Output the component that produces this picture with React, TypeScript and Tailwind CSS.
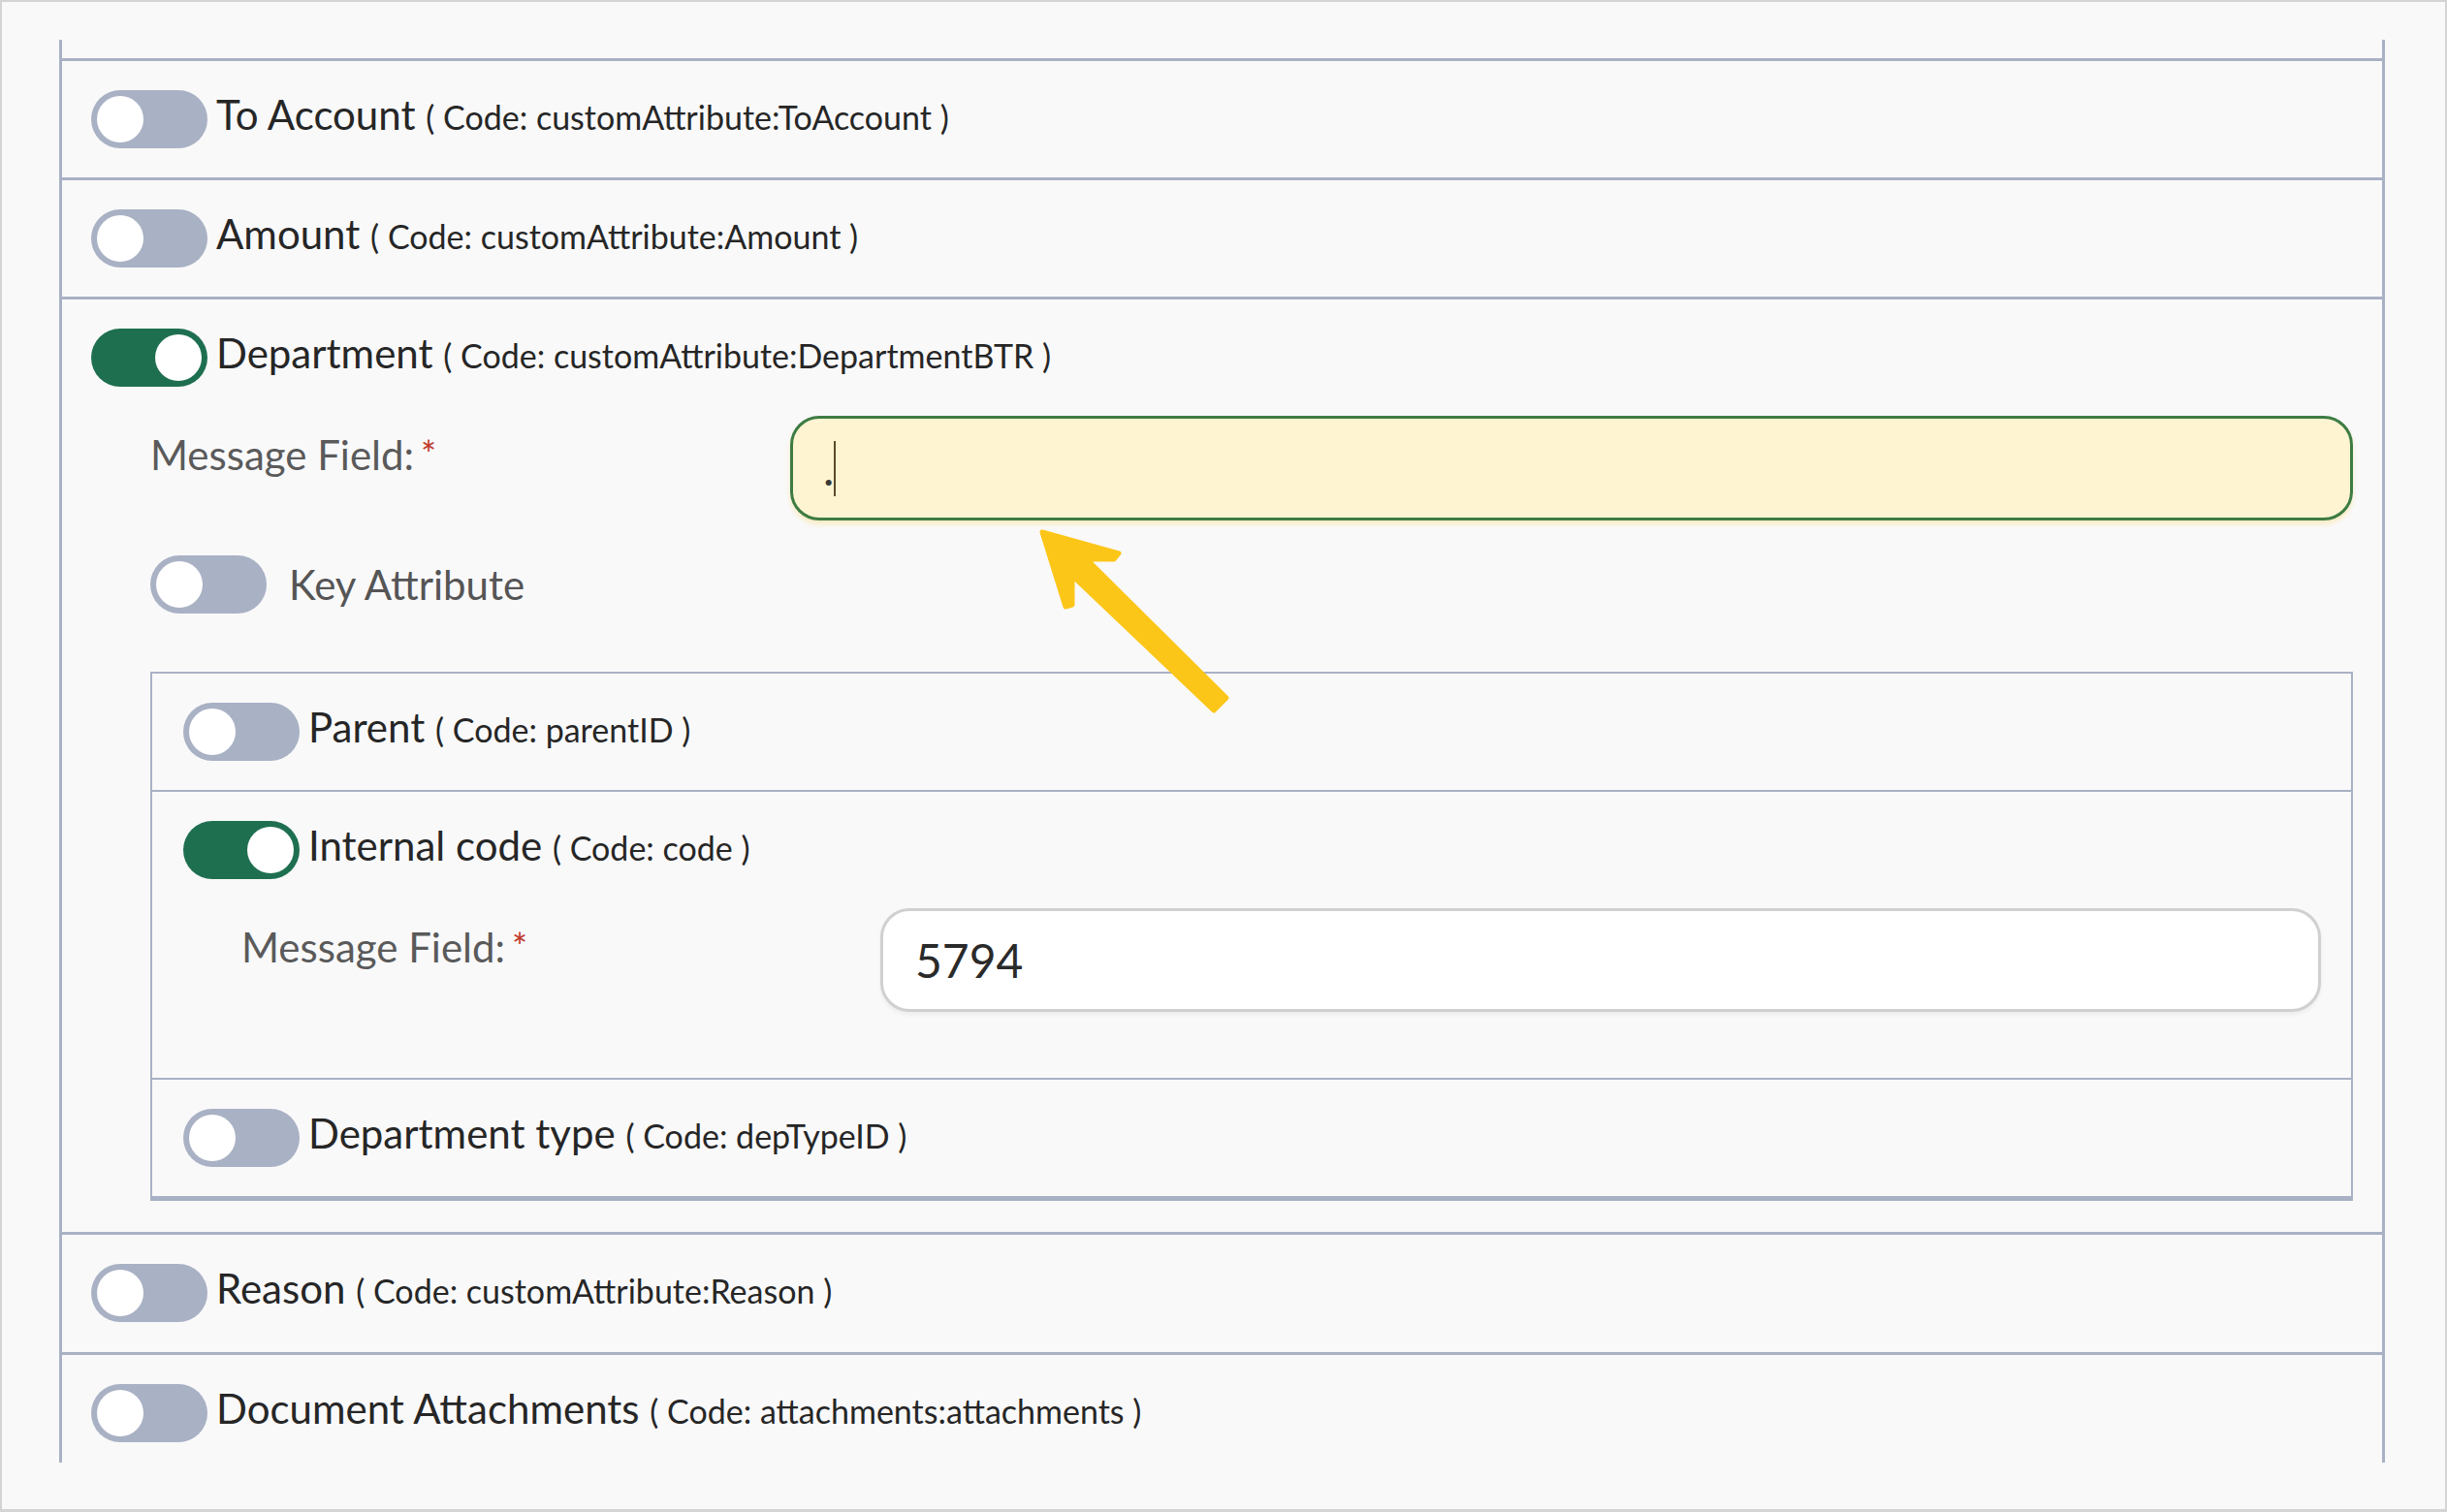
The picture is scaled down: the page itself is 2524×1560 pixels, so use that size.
import React from "react";

function Toggle({ on }: { on?: boolean }) {
  return (
    <div
      className={
        on
          ? "w-[120px] h-[60px] shrink-0 rounded-full bg-[#1e6f50] p-[6px] flex justify-end"
          : "w-[120px] h-[60px] shrink-0 rounded-full bg-[#a9b1c4] p-[6px] flex justify-start"
      }
    >
      <div className="w-[48px] h-[48px] rounded-full bg-white" />
    </div>
  );
}

function Title({ on, name, code }: { on?: boolean; name: string; code: string }) {
  return (
    <div className="flex items-start gap-[9px]">
      <Toggle on={on} />
      <div className="text-[42px] leading-[1.2] text-[#262626] whitespace-nowrap">
        <span>{name} </span>
        <span className="text-[34px]">( Code: {code} )</span>
      </div>
    </div>
  );
}

function Field({ active, value, labelWidth }: { active?: boolean; value: string; labelWidth: "a" | "b" }) {
  return (
    <div className="flex">
      <div
        className={
          labelWidth === "a"
            ? "w-[660px] shrink-0 pt-[15px] text-[42px] leading-[1.2] text-[#5a5a5a] whitespace-nowrap"
            : "w-[659px] shrink-0 pt-[15px] text-[42px] leading-[1.2] text-[#5a5a5a] whitespace-nowrap"
        }
      >
        Message Field:
        <span className="ml-[7px] text-[38px] text-[#c0392b] align-[2px]">*</span>
      </div>
      {active ? (
        <div className="flex-1 h-[108px] rounded-[30px] border-[3px] border-[#3d7c43] bg-[#fff4d2] pl-[31px] flex items-center shadow-[0_4px_5px_rgba(250,228,160,0.6)]">
          <span className="text-[48px] leading-[1.2] text-[#3a3a3a]">{value}</span>
          <span className="inline-block w-[2px] h-[57px] bg-[#5b4a2b]" />
        </div>
      ) : (
        <div className="flex-1 h-[107px] rounded-[30px] border-[3px] border-[#d0d0d0] bg-white pl-[33px] flex items-center shadow-[0_3px_4px_rgba(0,0,0,0.05)]">
          <span className="text-[48px] leading-[1.2] text-[#2a2a2a]">{value}</span>
        </div>
      )}
    </div>
  );
}

export default function App() {
  return (
    <div className="relative w-[2524px] h-[1560px] overflow-hidden border-2 border-b-[3px] border-[#d4d4d4] bg-[#f9f9fa] pt-[39px] pl-[59px] pr-[62px] font-[Lato,sans-serif]">
      <div className="h-[1468px] overflow-hidden border-x-[3px] border-[#a9b1c4]">
        <div className="h-[19px]" />

        <div className="border-t-[3px] border-[#a9b1c4] px-[30px] pt-[30px] pb-[30px]">
          <Title name="To Account" code="customAttribute:ToAccount" />
        </div>

        <div className="border-t-[3px] border-[#a9b1c4] px-[30px] pt-[30px] pb-[30px]">
          <Title name="Amount" code="customAttribute:Amount" />
        </div>

        <div className="border-t-[3px] border-[#a9b1c4] px-[30px] pt-[30px] pb-[32px]">
          <Title on name="Department" code="customAttribute:DepartmentBTR" />
          <div className="pl-[61px]">
            <div className="mt-[30px]">
              <Field active value="." labelWidth="a" />
            </div>
            <div className="mt-[36px] flex items-center gap-[23px]">
              <Toggle />
              <span className="text-[42px] leading-[1.2] text-[#555555]">Key Attribute</span>
            </div>
            <div className="mt-[60px] border-2 border-b-[5px] border-[#a9b1c4]">
              <div className="pl-[32px] pr-[31px] py-[30px]">
                <Title name="Parent" code="parentID" />
              </div>
              <div className="border-t-2 border-[#a9b1c4] pl-[32px] pr-[31px] pt-[30px] pb-[68px]">
                <Title on name="Internal code" code="code" />
                <div className="mt-[30px] pl-[60px]">
                  <Field value="5794" labelWidth="b" />
                </div>
              </div>
              <div className="border-t-2 border-[#a9b1c4] pl-[32px] pr-[31px] py-[30px]">
                <Title name="Department type" code="depTypeID" />
              </div>
            </div>
          </div>
        </div>

        <div className="border-t-[3px] border-[#a9b1c4] px-[30px] pt-[30px] pb-[31px]">
          <Title name="Reason" code="customAttribute:Reason" />
        </div>

        <div className="border-t-[3px] border-[#a9b1c4] px-[30px] pt-[30px] pb-[30px]">
          <Title name="Document Attachments" code="attachments:attachments" />
        </div>
      </div>

      <svg
        className="absolute left-[1048px] top-[528px]"
        width="230"
        height="220"
        viewBox="0 0 230 220"
      >
        <polygon
          points="25,19 104,41 99,47 71,47 215,190 202,203 56,64 56,94 49,96"
          fill="#fcc618"
          stroke="#fcc618"
          strokeWidth="5"
          strokeLinejoin="round"
        />
      </svg>
    </div>
  );
}
